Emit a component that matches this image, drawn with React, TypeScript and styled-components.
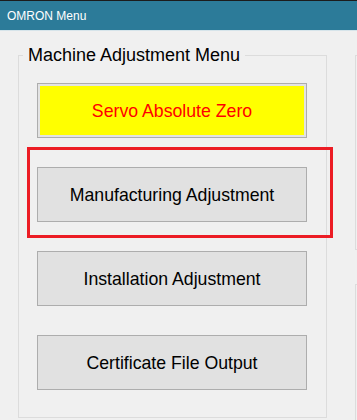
import styled, { createGlobalStyle } from "styled-components";

const GlobalStyle = createGlobalStyle`
  html, body {
    margin: 0;
    padding: 0;
    background: #f0f0f0;
  }
  body {
    font-family: "Liberation Sans", Arial, sans-serif;
  }
`;

const Window = styled.div`
  width: 357px;
  height: 420px;
  display: flex;
  flex-direction: column;
  overflow: hidden;
  background: #f0f0f0;
`;

const TitleBar = styled.div`
  height: 29px;
  border-top: 1px solid #1c1c1c;
  border-bottom: 1px solid #d6e4ea;
  background: #2c7b99;
  color: #ffffff;
  font-size: 12px;
  display: flex;
  align-items: center;
  padding-left: 7px;
  flex-shrink: 0;
`;

const Body = styled.div`
  flex: 1;
  display: flex;
  align-items: flex-start;
  gap: 28px;
  padding-left: 18px;
  overflow: hidden;
`;

const Group = styled.fieldset`
  width: 309px;
  box-sizing: border-box;
  margin: 14px 0 0 0;
  padding: 0;
  border: 1px solid #dcdcdc;
  height: 373px;
  flex-shrink: 0;
  min-inline-size: 0;
`;

const Legend = styled.legend`
  margin-left: 4px;
  padding: 0 5px;
  font-size: 18px;
  line-height: 21px;
  color: #000000;
`;

const Column = styled.div`
  display: flex;
  flex-direction: column;
  gap: 29px;
  padding: 17px 19px 0 18px;
`;

const Button = styled.button<{ $accent?: boolean }>`
  width: 270px;
  height: 55px;
  box-sizing: border-box;
  border: 1px solid #adadad;
  background: ${(p) => (p.$accent ? "#ffff00" : "#e1e1e1")};
  box-shadow: ${(p) => (p.$accent ? "inset 0 0 0 2px #e3e3e3" : "none")};
  color: ${(p) => (p.$accent ? "#ff0000" : "#000000")};
  font-family: "Liberation Sans", Arial, sans-serif;
  font-size: 17.7px;
  padding: 2px 0 0 0;
  cursor: pointer;
`;

const Highlight = styled.div`
  position: relative;

  &::before {
    content: "";
    position: absolute;
    left: -10px;
    right: -26px;
    top: -20px;
    bottom: -16px;
    border: 3px solid #ec1c24;
    pointer-events: none;
  }
`;

const SideColumn = styled.div`
  display: flex;
  flex-direction: column;
  gap: 34px;
  padding-top: 24px;
  flex-shrink: 0;
`;

const SideBox = styled.div<{ $h: number }>`
  width: 40px;
  height: ${(p) => p.$h}px;
  flex-shrink: 0;
  border: 1px solid #dcdcdc;
  box-sizing: border-box;
`;

export default function App() {
  return (
    <>
      <GlobalStyle />
      <Window>
        <TitleBar>OMRON Menu</TitleBar>
        <Body>
          <Group>
            <Legend>Machine Adjustment Menu</Legend>
            <Column>
              <Button $accent>Servo Absolute Zero</Button>
              <Highlight>
                <Button>Manufacturing Adjustment</Button>
              </Highlight>
              <Button>Installation Adjustment</Button>
              <Button>Certificate File Output</Button>
            </Column>
          </Group>
          <SideColumn>
            <SideBox $h={195} />
            <SideBox $h={200} />
          </SideColumn>
        </Body>
      </Window>
    </>
  );
}
